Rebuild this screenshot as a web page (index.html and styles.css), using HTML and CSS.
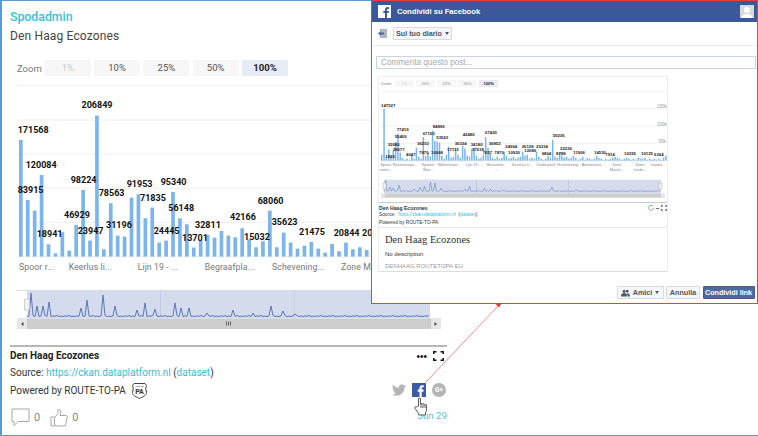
FILE: index.html
```html
<!DOCTYPE html>
<html lang="it">
<head>
    <meta charset="UTF-8">
    <meta name="viewport" content="width=device-width, initial-scale=1.0">
    <title>Den Haag Ecozones</title>
    <link rel="stylesheet" href="styles.css">
</head>
<body>
    <div class="post">
        <a class="author">Spodadmin</a>
        <h1 class="post-title">Den Haag Ecozones</h1>

        <div class="zoom-row">
            <span class="zoom-label">Zoom</span>
            <span class="zoom-btn off">1%</span>
            <span class="zoom-btn">10%</span>
            <span class="zoom-btn">25%</span>
            <span class="zoom-btn">50%</span>
            <span class="zoom-btn on">100%</span>
        </div>

        <svg id="big_chart" class="big-chart" viewBox="10 80 437 260">
            <g class="grid">
                <line x1="17" x2="447" y1="85.3" y2="85.3"/>
                <line x1="17" x2="447" y1="120" y2="120"/>
                <line x1="17" x2="447" y1="154" y2="154"/>
                <line x1="17" x2="447" y1="188.3" y2="188.3"/>
                <line x1="17" x2="447" y1="222.6" y2="222.6"/>
                <line x1="17" x2="447" y1="256.8" y2="256.8"/>
                <line x1="20" x2="20" y1="257" y2="260"/>
                <line x1="89" x2="89" y1="257" y2="260"/>
                <line x1="158" x2="158" y1="257" y2="260"/>
                <line x1="227" x2="227" y1="257" y2="260"/>
                <line x1="296" x2="296" y1="257" y2="260"/>
                <line x1="365" x2="365" y1="257" y2="260"/>
            </g>
            <g id="big_bars" class="bars"></g>
            <g class="labels">
                <text x="81.5" y="108">206849</text>
                <text x="17.7" y="132.7">171568</text>
                <text x="25.7" y="167.7">120084</text>
                <text x="17.7" y="192.7">83915</text>
                <text x="70.7" y="182.7">98224</text>
                <text x="64" y="218">46929</text>
                <text x="126.7" y="186.7">91953</text>
                <text x="98.7" y="196">78563</text>
                <text x="140" y="200.7">71835</text>
                <text x="160.7" y="185">95340</text>
                <text x="168.3" y="211">56148</text>
                <text x="257.7" y="203.7">68060</text>
                <text x="230" y="220">42166</text>
                <text x="36.7" y="237.3">18941</text>
                <text x="77.7" y="233.7">23947</text>
                <text x="106" y="228.3">31196</text>
                <text x="153.7" y="233.7">24445</text>
                <text x="195" y="228">32811</text>
                <text x="182" y="241">13701</text>
                <text x="244" y="240">15032</text>
                <text x="271.7" y="225">35623</text>
                <text x="299" y="235.3">21475</text>
                <text x="333.7" y="235.7">20844</text>
                <text x="362" y="235.7">20</text>
            </g>
            <g class="cats">
                <text x="19" y="270">Spoor r...</text>
                <text x="68.7" y="270">Keerlus li...</text>
                <text x="137.7" y="270">Lijn 19 - ...</text>
                <text x="204.7" y="270">Begraafpla...</text>
                <text x="272" y="270">Schevening...</text>
                <text x="341" y="270">Zone Ma</text>
            </g>
            <!-- navigator -->
            <line class="nav-top" x1="17" x2="27" y1="290.5" y2="290.5"/>
            <rect class="nav-mask" x="27" y="290" width="403" height="28.5"/>
            <line class="nav-sep" x1="160.5" x2="160.5" y1="290" y2="318"/>
            <line class="nav-sep" x1="294" x2="294" y1="290" y2="318"/>
            <polyline id="big_nav" class="nav-line" points=""/>
            <rect class="nav-handle" x="24.5" y="299" width="5" height="11"/>
            <rect class="scroll-track" x="17" y="318.5" width="424" height="10.5"/>
            <rect class="scroll-btn" x="17" y="318.5" width="10" height="10.5"/>
            <rect class="scroll-btn" x="431" y="318.5" width="10" height="10.5"/>
            <path class="scroll-arrow" d="M23.5 322v4l-2.500-2z"/>
            <path class="scroll-arrow" d="M434.500 322v4l2.500-2z"/>
            <path class="scroll-grip" d="M226.500 321.500v4M228.500 321.500v4M230.500 321.500v4"/>
        </svg>

        <div class="info">
            <div class="info-icons">
                <span class="dots">•••</span>
                <svg class="full-icon" viewBox="0 0 11 10"><path d="M.8 3V.8H3.500M7.500.8h2.700V3M.8 7v2.200h2.700M7.500 9.200h2.700V7"/></svg>
            </div>
            <div class="info-title">Den Haag Ecozones</div>
            <div class="info-line">Source: <a>https://ckan.dataplatform.nl</a> (<a>dataset</a>)</div>
            <div class="info-line powered">Powered by ROUTE-TO-PA
                <svg class="badge" viewBox="0 0 17 17">
                    <path d="M3 1.500h11l1.500 2-.8 2.500.8 4.500c0 3-4 4.500-7 6-3-1.500-7-3-7-6l.8-4.500L1.500 3.500z"/>
                    <text x="8.500" y="12" class="badge-text">PA</text>
                    <text x="8.500" y="5" class="badge-small">ROUTE</text>
                </svg>
            </div>
        </div>

        <div class="foot">
            <div class="counts">
                <svg class="count-icon" viewBox="0 0 19 19"><path d="M1 1h17v12.500H7L3 17.500v-4H1z"/></svg>
                <span class="count">0</span>
                <svg class="count-icon thumb" viewBox="0 0 18 19"><path d="M1 9h3.500v9H1zM4.500 9.500 8 5.500V1.500c1.800-.5 2.800.8 2.800 2.500L10 7.500h6c1.300 0 1.500 1.200 1 2.200l-1.500 7.300c-.2.700-.7 1-1.500 1H7l-2.500-1"/></svg>
                <span class="count">0</span>
            </div>
            <div class="social-col">
                <div class="social">
                    <svg class="tw" viewBox="0 0 24 24"><path d="M23.953 4.57a10 10 0 01-2.825.775 4.958 4.958 0 002.163-2.723c-.951.555-2.005.959-3.127 1.184a4.92 4.92 0 00-8.384 4.482C7.690 8.095 4.067 6.130 1.640 3.162a4.822 4.822 0 00-.666 2.475c0 1.710.870 3.213 2.188 4.096a4.904 4.904 0 01-2.228-.616v.060a4.923 4.923 0 003.946 4.827 4.996 4.996 0 01-2.212.085 4.936 4.936 0 004.604 3.417 9.867 9.867 0 01-6.102 2.105c-.390 0-.779-.023-1.170-.067a13.995 13.995 0 007.557 2.209c9.053 0 13.998-7.496 13.998-13.985 0-.210 0-.420-.015-.630A9.935 9.935 0 0024 4.590z"/></svg>
                    <svg class="fb" viewBox="0 0 14 14"><rect width="14" height="14"/><path d="M9.700 14V8.700h1.700l.3-2.100h-2V5.300c0-.6.200-1 1-1h1.100V2.400c-.2 0-.8-.1-1.600-.1-1.600 0-2.700 1-2.700 2.800v1.500H5.700v2.100h1.800V14z"/></svg>
                    <span class="gplus">G+</span>
                </div>
                <a class="date">Jun 29</a>
            </div>
        </div>
    </div>

    <!-- hand cursor -->
    <svg class="cursor" viewBox="0 0 14 19"><path d="M4.500 9V2c0-1.500 2-1.500 2 0v5l.5-.3c.5-.3 1.500-.3 1.700.3.500-.3 1.500-.3 1.800.4.500-.3 1.700-.2 2 .7v4.400c0 1.500-.5 2.500-1 3.500v2H4.700v-1.500L1 11.500c-.7-1 .5-2.500 1.800-1.500z"/><path class="cursor-lines" d="M7 7v4M9 7.200V11M11 7.800V11"/></svg>

    <!-- freccia dal bottone al popup -->
    <svg class="arrow" viewBox="0 0 758 436">
        <line x1="426" y1="382" x2="498" y2="306"/>
        <path d="M502 302.500l-6.500 1.500 3.500 3.500z"/>
    </svg>

    <div class="share">
        <div class="share-head">
            <svg class="share-logo" viewBox="0 0 13 13"><rect width="13" height="13"/><path d="M9 13V8h1.600l.3-2H9V4.900c0-.6.200-1 1-1h1V2.200c-.2 0-.8-.1-1.500-.1C8 2.100 7 3 7 4.700V6H5.300v2H7v5z"/></svg>
            <span class="share-title">Condividi su Facebook</span>
            <svg class="avatar" viewBox="0 0 14 13"><rect width="14" height="13"/><circle cx="7" cy="5" r="3"/><path d="M2 13c0-3 2-4 5-4s5 1 5 4z"/></svg>
        </div>
        <div class="share-where">
            <svg class="book" viewBox="0 0 9 9"><rect x="2" y="0" width="7" height="9"/><path d="M0 4.500 3 2v1.500h3v2H3V7z"/></svg>
            <span class="fb-btn where-btn">Sul tuo diario <i class="caret"></i></span>
        </div>
        <div class="comment">Commenta questo post...</div>

        <div class="preview">
            <div class="mini-zoom">
                <span class="mini-label">Zoom</span>
                <span class="mini-btn off">1%</span>
                <span class="mini-btn">10%</span>
                <span class="mini-btn">25%</span>
                <span class="mini-btn">50%</span>
                <span class="mini-btn on">100%</span>
            </div>
            <svg class="mini-chart" viewBox="379 89 288 113">
                <g class="grid">
                    <line x1="381" x2="665" y1="92.300" y2="92.300"/>
                    <line x1="381" x2="657" y1="109.500" y2="109.500"/>
                    <line x1="381" x2="657" y1="127" y2="127"/>
                    <line x1="381" x2="657" y1="144.300" y2="144.300"/>
                    <line x1="381" x2="665" y1="161.900" y2="161.900"/>
                </g>
                <g class="mini-axis">
                    <text x="657" y="109">150k</text>
                    <text x="657" y="126.500">100k</text>
                    <text x="658.500" y="144">50k</text>
                </g>
                <g id="mini_bars" class="bars"></g>
                <g class="mini-labels">
                    <text x="381" y="108">147527</text>
                    <text x="396.700" y="132">77419</text>
                    <text x="432.700" y="129">84896</text>
                    <text x="394.700" y="139">55409</text>
                    <text x="422.700" y="135.700">67153</text>
                    <text x="436.300" y="140">53563</text>
                    <text x="462.700" y="137">42480</text>
                    <text x="485" y="135.300">67420</text>
                    <text x="387.700" y="147.300">32680</text>
                    <text x="392.700" y="152">28677</text>
                    <text x="417" y="145.700">36253</text>
                    <text x="454.700" y="145.700">36334</text>
                    <text x="470.700" y="146.500">34180</text>
                    <text x="488.700" y="146.300">36852</text>
                    <text x="505.300" y="149">24964</text>
                    <text x="521.700" y="149">26128</text>
                    <text x="536" y="149">25334</text>
                    <text x="447" y="152.300">17113</text>
                    <text x="472" y="152.300">37618</text>
                    <text x="419" y="155">7870</text>
                    <text x="431" y="155">10068</text>
                    <text x="385.300" y="158.500">1826</text>
                    <text x="406" y="157">4047</text>
                    <text x="482.700" y="155.300">7657</text>
                    <text x="494.300" y="155.300">7870</text>
                    <text x="508" y="155">10920</text>
                    <text x="524.300" y="153">12080</text>
                    <text x="552.700" y="138.300">59236</text>
                    <text x="560" y="151.300">22230</text>
                    <text x="541.700" y="155.500">9804</text>
                    <text x="556" y="156">8788</text>
                    <text x="573.300" y="155">11906</text>
                    <text x="594" y="154.500">14530</text>
                    <text x="605.300" y="156.500">7914</text>
                    <text x="624" y="156">10395</text>
                    <text x="641" y="156">10125</text>
                    <text x="654" y="157">6304</text>
                </g>
                <g class="mini-cats">
                    <text x="385.700" y="166.700">Spoor</text>
                    <text x="385.700" y="171.700">nemi...</text>
                    <text x="405" y="166.700">Reservespo...</text>
                    <text x="428" y="166.700">Sporen</text>
                    <text x="428" y="171.700">Sbu...</text>
                    <text x="449" y="166.700">Molensloot...</text>
                    <text x="475" y="166.700">Lijn 19 - ...</text>
                    <text x="496.700" y="166.700">Houtzone...</text>
                    <text x="496.700" y="171.700">...</text>
                    <text x="522" y="166.700">Keerlus li...</text>
                    <text x="546" y="166.700">Zuiderpark</text>
                    <text x="569" y="166.700">Schevening...</text>
                    <text x="593" y="166.700">Amateurtui...</text>
                    <text x="616.700" y="166.700">Zone</text>
                    <text x="616.700" y="171.700">Machi...</text>
                    <text x="640" y="166.700">Zone</text>
                    <text x="640" y="171.700">Leids...</text>
                    <text x="658" y="166.700">Isaakz...</text>
                </g>
                <rect class="nav-mask" x="384" y="180.700" width="277" height="14"/>
                <line class="nav-sep" x1="476.500" x2="476.500" y1="181" y2="195"/>
                <line class="nav-sep" x1="568.500" x2="568.500" y1="181" y2="195"/>
                <polyline id="mini_nav" class="nav-line thin" points=""/>
                <rect class="nav-handle" x="383" y="184" width="3" height="6"/>
                <rect class="nav-handle" x="659" y="184" width="3" height="6"/>
                <rect class="scroll-track" x="381" y="194.700" width="284" height="4"/>
                <rect class="scroll-btn" x="381" y="194.700" width="4" height="4"/>
                <rect class="scroll-btn" x="661" y="194.700" width="4" height="4"/>
            </svg>
            <div class="mini-info">
                <div class="mini-icons">
                    <svg class="refresh" viewBox="0 0 6 6"><path d="M5 1.500A2.400 2.400 0 1 0 5.400 3"/></svg>
                    <span class="mini-dots">•••</span>
                    <svg class="mini-full" viewBox="0 0 11 10"><path d="M.8 3V.8H3.500M7.500.8h2.700V3M.8 7v2.200h2.700M7.500 9.200h2.700V7"/></svg>
                </div>
                <div class="mini-title">Den Haag Ecozones</div>
                <div class="mini-line">Source: &nbsp;<a>https://ckan.dataplatform.nl</a> &nbsp;(<a>dataset</a>)</div>
                <div class="mini-line">Powered by ROUTE-TO-PA</div>
            </div>
            <div class="link-card">
                <div class="link-title">Den Haag Ecozones</div>
                <div class="link-desc">No description</div>
                <div class="link-site">DENHAAG.ROUTETOPA.EU</div>
            </div>
        </div>

        <div class="share-foot">
            <span class="fb-btn friends-btn">
                <svg class="people" viewBox="0 0 10 8"><circle cx="3.500" cy="2" r="1.700"/><circle cx="7" cy="2" r="1.500"/><path d="M0 8c0-3 1.500-4 3.500-4S7 5 7 8zM7.500 8c0-1.500-.3-2.500-1-3.500C8.500 4 10 5 10 8z"/></svg>
                Amici <i class="caret"></i>
            </span>
            <span class="fb-btn cancel-btn">Annulla</span>
            <span class="fb-btn submit-btn">Condividi link</span>
        </div>
    </div>

    <script src="chart.js"></script>
</body>
</html>
```

FILE: styles.css
```css
* {
    box-sizing: border-box;
}

body {
    margin: 0;
    font-family: Roboto, sans-serif;
    background-color: white;
    overflow: hidden;
}

a {
    color: #35c0dc;
}

.post {
    width: 758px;
    height: 436px;
    padding: 9px 0 0 8px;
    border-left: 2px solid #5b9bd5;
    border-top: 1px solid #5b9bd5;
    border-bottom: 1px solid #5b9bd5;
}

.author {
    display: block;
    font-size: 12.300px;
    font-weight: 500;
    line-height: 14px;
    color: #2fc4de;
}

.post-title {
    margin: 5px 0 0;
    font-size: 12px;
    font-weight: 400;
    line-height: 15px;
    letter-spacing: .15px;
    color: #444;
}

.zoom-row {
    display: flex;
    align-items: center;
    gap: 3.300px;
    margin: 16px 0 0 7px;
    height: 16px;
    font-size: 9.500px;
    color: #666;
}

.zoom-label {
    width: 24px;
    margin-right: .5px;
    color: #777;
}

.zoom-btn {
    width: 46px;
    height: 16px;
    line-height: 16px;
    text-align: center;
    background-color: #f7f7f7;
    color: #555;
    border-radius: 1px;
}

.zoom-btn.off {
    color: #ccc;
}

.zoom-btn.on {
    background-color: #e6ebf5;
    color: #222;
    font-weight: 700;
}

.big-chart {
    display: block;
    width: 437px;
    height: 260px;
    margin-top: 4px;
}

.grid line {
    stroke: #eef0f3;
    stroke-width: 1;
}

.bars rect {
    fill: #7cb5ec;
}

.labels text {
    font-size: 9px;
    font-weight: 700;
    fill: #111;
}

.cats text {
    font-size: 8.700px;
    fill: #777;
    letter-spacing: .1px;
}

.nav-top {
    stroke: #ddd;
}

.nav-mask {
    fill: #d3dbec;
}

.nav-sep {
    stroke: #c3cbe0;
}

.nav-line {
    fill: none;
    stroke: #5c78bd;
    stroke-width: 1;
}

.nav-line.thin {
    stroke: #7b93cb;
    stroke-width: .7;
}

.nav-handle {
    fill: #f2f2f2;
    stroke: #bbb;
    stroke-width: .6;
}

.scroll-track {
    fill: #cdcdcd;
}

.scroll-btn {
    fill: #e6e6e6;
}

.scroll-arrow {
    fill: #444;
}

.scroll-grip {
    fill: none;
    stroke: #444;
    stroke-width: .8;
}

.info {
    width: 437px;
    margin-top: 5px;
    padding-top: 3px;
    border-top: 2px solid #b8b8b8;
}

.info-icons {
    display: flex;
    align-items: center;
    justify-content: flex-end;
    gap: 6px;
    float: right;
    margin: 0 3px 0 0;
    height: 12px;
}

.dots {
    font-family: "Liberation Sans", sans-serif;
    font-size: 10px;
    color: #111;
}

.full-icon {
    width: 11px;
    height: 10px;
    fill: none;
    stroke: #111;
    stroke-width: 1.500;
}

.info-title {
    font-size: 10px;
    font-weight: 700;
    line-height: 12px;
    color: #222;
}

.info-line {
    margin-top: 4px;
    font-size: 10px;
    line-height: 13px;
    color: #333;
}

.powered {
    display: flex;
    align-items: center;
    gap: 5px;
    height: 14px;
    white-space: nowrap;
}

.badge {
    width: 17px;
    height: 17px;
    fill: white;
    stroke: #444;
    stroke-width: 1;
}

.badge-text {
    font-size: 7px;
    font-weight: 700;
    text-anchor: middle;
    fill: #333;
    stroke: none;
}

.badge-small {
    font-size: 2.500px;
    text-anchor: middle;
    fill: #333;
    stroke: none;
}

.foot {
    display: flex;
    justify-content: space-between;
    width: 437px;
    margin-top: -14px;
}

.counts {
    display: flex;
    align-items: center;
    align-self: flex-end;
    margin: 0 0 -4px 1px;
}

.count-icon {
    width: 19px;
    height: 19px;
    fill: none;
    stroke: #a8a8a8;
    stroke-width: 1;
}

.count-icon.thumb {
    width: 18px;
    margin-left: 10px;
}

.count {
    margin-left: 4px;
    font-size: 11px;
    color: #888;
}

.social-col {
    display: flex;
    flex-direction: column;
    align-items: flex-end;
}

.social {
    display: flex;
    align-items: center;
    gap: 6px;
}

.tw {
    width: 14px;
    height: 14px;
    fill: #b4b4b4;
}

.fb {
    width: 14px;
    height: 14px;
    fill: #3b5ba5;
}

.fb path {
    fill: white;
}

.gplus {
    width: 14px;
    height: 14px;
    margin-right: 1px;
    border-radius: 50%;
    background-color: #b4b4b4;
    color: white;
    font-size: 6.500px;
    font-weight: 700;
    line-height: 14px;
    text-align: center;
}

.date {
    margin-top: 12px;
    font-size: 9.700px;
    line-height: 14px;
    color: #4cc3e0;
}

.cursor {
    position: absolute;
    left: 414px;
    top: 397px;
    width: 14px;
    height: 19px;
    fill: white;
    stroke: #333;
    stroke-width: .8;
}

.cursor-lines {
    fill: none;
}

.arrow {
    position: absolute;
    left: 0;
    top: 0;
    width: 758px;
    height: 436px;
    pointer-events: none;
    z-index: 2;
}

.arrow line {
    stroke: #f78a8a;
    stroke-width: 1;
}

.arrow path {
    fill: #ee3b3b;
}

.share {
    position: absolute;
    left: 371px;
    top: 0;
    width: 387px;
    height: 304px;
    background-color: white;
    border: 1.500px solid #ee3b3b;
    font-family: "Liberation Sans", sans-serif;
}

.share-head {
    display: flex;
    align-items: center;
    height: 21px;
    padding: 0 3px 0 6px;
    background-color: #3b5998;
}

.share-logo {
    width: 13px;
    height: 13px;
    fill: white;
}

.share-logo path {
    fill: #3b5998;
}

.share-title {
    flex: 1;
    margin-left: 6px;
    font-size: 7.600px;
    font-weight: 700;
    color: white;
}

.avatar {
    width: 14px;
    height: 13px;
    fill: #d8d8d8;
}

.avatar circle,
.avatar path {
    fill: white;
}

.share-where {
    display: flex;
    align-items: center;
    gap: 6px;
    height: 24px;
    padding: 0 0 1px 6px;
    border-bottom: 1px solid #eceef1;
}

.book {
    width: 9px;
    height: 9px;
    fill: #aeb6c6;
}

.book path {
    fill: #4b6aa5;
}

.fb-btn {
    display: inline-flex;
    align-items: center;
    justify-content: center;
    height: 13px;
    font-size: 7.200px;
    font-weight: 700;
    white-space: nowrap;
    color: #4e5665;
    background-color: #f6f7f8;
    border: 1px solid #d8dade;
    border-radius: 1px;
}

.where-btn {
    width: 59px;
    gap: 3px;
}

.caret {
    width: 0;
    height: 0;
    border-left: 2.500px solid transparent;
    border-right: 2.500px solid transparent;
    border-top: 3px solid #4e5665;
}

.comment {
    height: 13px;
    margin: 10px 1px 0 4px;
    padding-left: 4px;
    border: 1px solid #c8d3e6;
    font-size: 8.200px;
    line-height: 11px;
    color: #a8a8a8;
}

.preview {
    width: 290px;
    height: 196px;
    margin: 7px 0 0 6px;
    padding-top: 3px;
    border: 1px solid #eceef0;
    border-bottom: 1px solid #dcdee2;
}

.mini-zoom {
    display: flex;
    align-items: center;
    gap: 1.600px;
    height: 7px;
    padding-left: 2px;
    font-size: 4px;
    color: #888;
}

.mini-label {
    width: 12px;
}

.mini-btn {
    width: 19.500px;
    height: 7px;
    line-height: 7px;
    text-align: center;
    background-color: #f7f7f7;
}

.mini-btn.off {
    color: #ccc;
}

.mini-btn.on {
    background-color: #e6ebf5;
    color: #222;
    font-weight: 700;
}

.mini-chart {
    display: block;
    width: 288px;
    height: 113px;
    margin-top: 1px;
}

.mini-axis text {
    font-size: 4.500px;
    fill: #999;
}

.mini-labels text {
    font-size: 4.300px;
    font-weight: 700;
    fill: #222;
}

.mini-cats text {
    font-size: 4px;
    fill: #888;
    text-anchor: middle;
}

.mini-info {
    height: 26px;
    margin-top: 1px;
    padding: 2px 0 0 0;
    border-top: 1px solid #ccc;
    border-bottom: 1px solid #e4e6e8;
    font-size: 4.800px;
    color: #333;
}

.mini-icons {
    display: flex;
    align-items: center;
    gap: 2px;
    float: right;
}

.refresh {
    width: 6px;
    height: 6px;
    fill: none;
    stroke: #4caf50;
    stroke-width: .8;
}

.mini-dots {
    font-size: 4px;
    letter-spacing: -.3px;
}

.mini-full {
    width: 6px;
    height: 6px;
    fill: none;
    stroke: #222;
    stroke-width: 1.500;
}

.mini-title {
    font-size: 5.100px;
    font-weight: 700;
    line-height: 6px;
}

.mini-line {
    margin-top: 1px;
    line-height: 6.500px;
}

.link-card {
    padding: 5px 0 0 6px;
}

.link-title {
    font-family: "Liberation Serif", serif;
    font-size: 10.500px;
    line-height: 14px;
    color: #333;
}

.link-desc {
    margin-top: 2px;
    font-size: 6px;
    line-height: 10px;
    color: #333;
}

.link-site {
    margin-top: 2px;
    font-size: 6px;
    line-height: 10px;
    color: #999;
}

.share-foot {
    display: flex;
    justify-content: flex-end;
    gap: 2.500px;
    margin: 14px 2.500px 0 0;
}

.friends-btn {
    width: 47px;
    gap: 3px;
}

.people {
    width: 9px;
    height: 8px;
    fill: #4e5665;
}

.cancel-btn {
    width: 34px;
}

.submit-btn {
    width: 52px;
    color: white;
    background-color: #4e69a2;
    border-color: #435a8b;
}
```

FILE: chart.js
```js
// altezze lette dal grafico, in terzi di pixel
const big_data = [350, 170, 138, 245, 37, 10, 73, 18, 95, 200, 48, 423, 22, 160, 63, 60, 177, 187, 115, 147, 42, 48, 194, 115, 97, 27,
    50, 65, 57, 77, 63, 58, 85, 52, 28, 46, 138, 28, 72, 42, 24, 33, 44, 24, 12, 38, 16, 42, 22, 28, 20];

// anteprima, in pixel
const mini_data = [6, 52, 4, 11.5, 5, 10, 19, 27, 8, 3, 1, 2, 1, 6, 2, 13, 4, 2, 23.5, 5, 8, 4, 30, 20, 19, 18, 5, 2, 6, 14, 3, 4, 13, 6, 3, 15, 12, 5, 4, 12, 13, 5, 2, 3, 6, 23.5, 13,
    7, 3, 2, 4, 2, 3, 9, 5, 2, 3, 4, 2, 3, 4, 9, 5, 6, 2, 3, 2, 9, 4, 2, 1, 2, 5, 3, 21, 4, 3, 8, 5, 3, 4, 2, 3, 5, 3, 1, 2, 4, 1, 3, 2, 1, 2, 5, 3, 2, 1, 2, 1, 2, 3, 4, 3, 2, 1, 2, 3, 2, 1, 2, 1, 3, 2, 2, 3, 1, 2, 1, 2, 1, 2, 1, 3, 5];

// picchi del navigatore: [x, y]
const big_peaks = [[31, 293], [37.7, 306], [43.300, 306], [48.700, 302], [70, 308], [80.700, 308], [87.300, 300], [90, 307], [102.700, 295], [115.300, 306], [136.700, 310], [145.300, 303], [154.300, 309], [175.700, 303], [181.700, 308], [189, 308], [206.700, 313], [224, 311], [232.300, 310], [244, 310], [253.300, 313], [271, 306], [282.700, 311], [295, 314], [330, 314], [364, 314], [400, 314]];
const mini_peaks = [[385.700, 181.500], [390, 188], [393.300, 189], [399, 186], [413.300, 190], [420, 188], [425, 187], [431, 183], [435.700, 184], [441.700, 189], [465, 190], [470, 187], [485, 189], [490, 190], [503, 191], [551.700, 188], [576.700, 191], [620, 192], [650, 192]];

function drawBars(id, data, start, pitch, width, base, scale) {
    const group = document.getElementById(id);
    data.forEach((value, i) => {
        const bar = document.createElementNS('http://www.w3.org/2000/svg', 'rect');
        bar.setAttribute('x', start + i * pitch);
        bar.setAttribute('y', base - value * scale);
        bar.setAttribute('width', width);
        bar.setAttribute('height', value * scale);
        group.appendChild(bar);
    });
}

// linea quasi piatta con i picchi sopra
function drawNav(id, peaks, start, end, base, step) {
    const points = [];
    for (let x = start, i = 0; x < end; x += step, i++) {
        const peak = peaks.find(p => Math.abs(p[0] - x) < step / 2);
        const wiggle = [0, .6, .2, 1, 0, .4][i % 6];
        points.push(`${x},${peak ? peak[1] : base - wiggle}`);
    }
    document.getElementById(id).setAttribute('points', points.join(' '));
}

drawBars('big_bars', big_data, 19, 6.917, 3.700, 256.600, 1 / 3);
drawBars('mini_bars', mini_data, 381, 2.310, 1.500, 161.700, 1);
drawNav('big_nav', big_peaks, 27, 430, 316.500, 2);
drawNav('mini_nav', mini_peaks, 384, 661, 192.500, 1.500);
```
